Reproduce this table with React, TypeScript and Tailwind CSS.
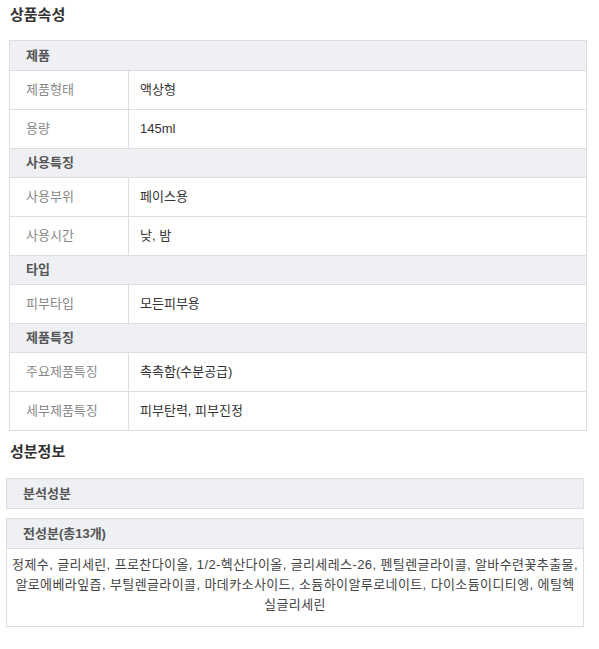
const font = { fontFamily: '"Liberation Sans", "Noto Sans CJK KR", sans-serif' };

type Row = { label: string; value: string };
type Group = { title: string; rows: Row[] };

const groups: Group[] = [
  {
    title: "제품",
    rows: [
      { label: "제품형태", value: "액상형" },
      { label: "용량", value: "145ml" },
    ],
  },
  {
    title: "사용특징",
    rows: [
      { label: "사용부위", value: "페이스용" },
      { label: "사용시간", value: "낮, 밤" },
    ],
  },
  {
    title: "타입",
    rows: [{ label: "피부타입", value: "모든피부용" }],
  },
  {
    title: "제품특징",
    rows: [
      { label: "주요제품특징", value: "촉촉함(수분공급)" },
      { label: "세부제품특징", value: "피부탄력, 피부진정" },
    ],
  },
];

const ingredients =
  "정제수, 글리세린, 프로찬다이올, 1/2-헥산다이올, 글리세레스-26, 펜틸렌글라이콜, 알바수련꽃추출물, 알로에베라잎즙, 부틸렌글라이콜, 마데카소사이드, 소듐하이알루로네이트, 다이소듐이디티엥, 에틸헥실글리세린";

export default function App() {
  return (
    <div className="w-[599px] h-[649px] bg-white text-[13px] text-[#333]" style={font}>
      <h2 className="pl-[10px] pt-[5px] h-[40px] text-[15px] font-bold leading-[20px] text-[#333]">상품속성</h2>

      <div className="ml-[9px] w-[578px] border border-[#dcdde0]">
        {groups.map((g, gi) => (
          <div key={g.title}>
            <div
              className={`h-[29px] flex items-center pl-[16px] bg-[#eef0f4] font-bold text-[#555] ${gi > 0 ? "border-t border-[#dcdde0]" : ""}`}
            >
              {g.title}
            </div>
            {g.rows.map((r) => (
              <div key={r.label} className="flex h-[39px] border-t border-[#dcdde0]">
                <div className="w-[119px] shrink-0 flex items-center pl-[16px] text-[#888] border-r border-[#dcdde0]">
                  {r.label}
                </div>
                <div className="flex-1 flex items-center pl-[11px] text-[#333]">{r.value}</div>
              </div>
            ))}
          </div>
        ))}
      </div>

      <h2 className="pl-[10px] pt-[11px] h-[47px] text-[15px] font-bold leading-[20px] text-[#333]">성분정보</h2>

      <div className="ml-[6px] w-[578px]">
        <div className="h-[31px] flex items-center pl-[16px] bg-[#eef0f4] border border-[#dcdde0] font-bold text-[#555]">
          분석성분
        </div>
        <div className="mt-[9px] border border-[#dcdde0]">
          <div className="h-[30px] flex items-center pl-[16px] bg-[#eef0f4] border-b border-[#dcdde0] font-bold text-[#555]">
            전성분(총13개)
          </div>
          <p className="px-[5px] pt-[6px] pb-[11px] text-center leading-[20px] tracking-[0.4px] text-[#444] break-all">
            {ingredients}
          </p>
        </div>
      </div>
    </div>
  );
}
